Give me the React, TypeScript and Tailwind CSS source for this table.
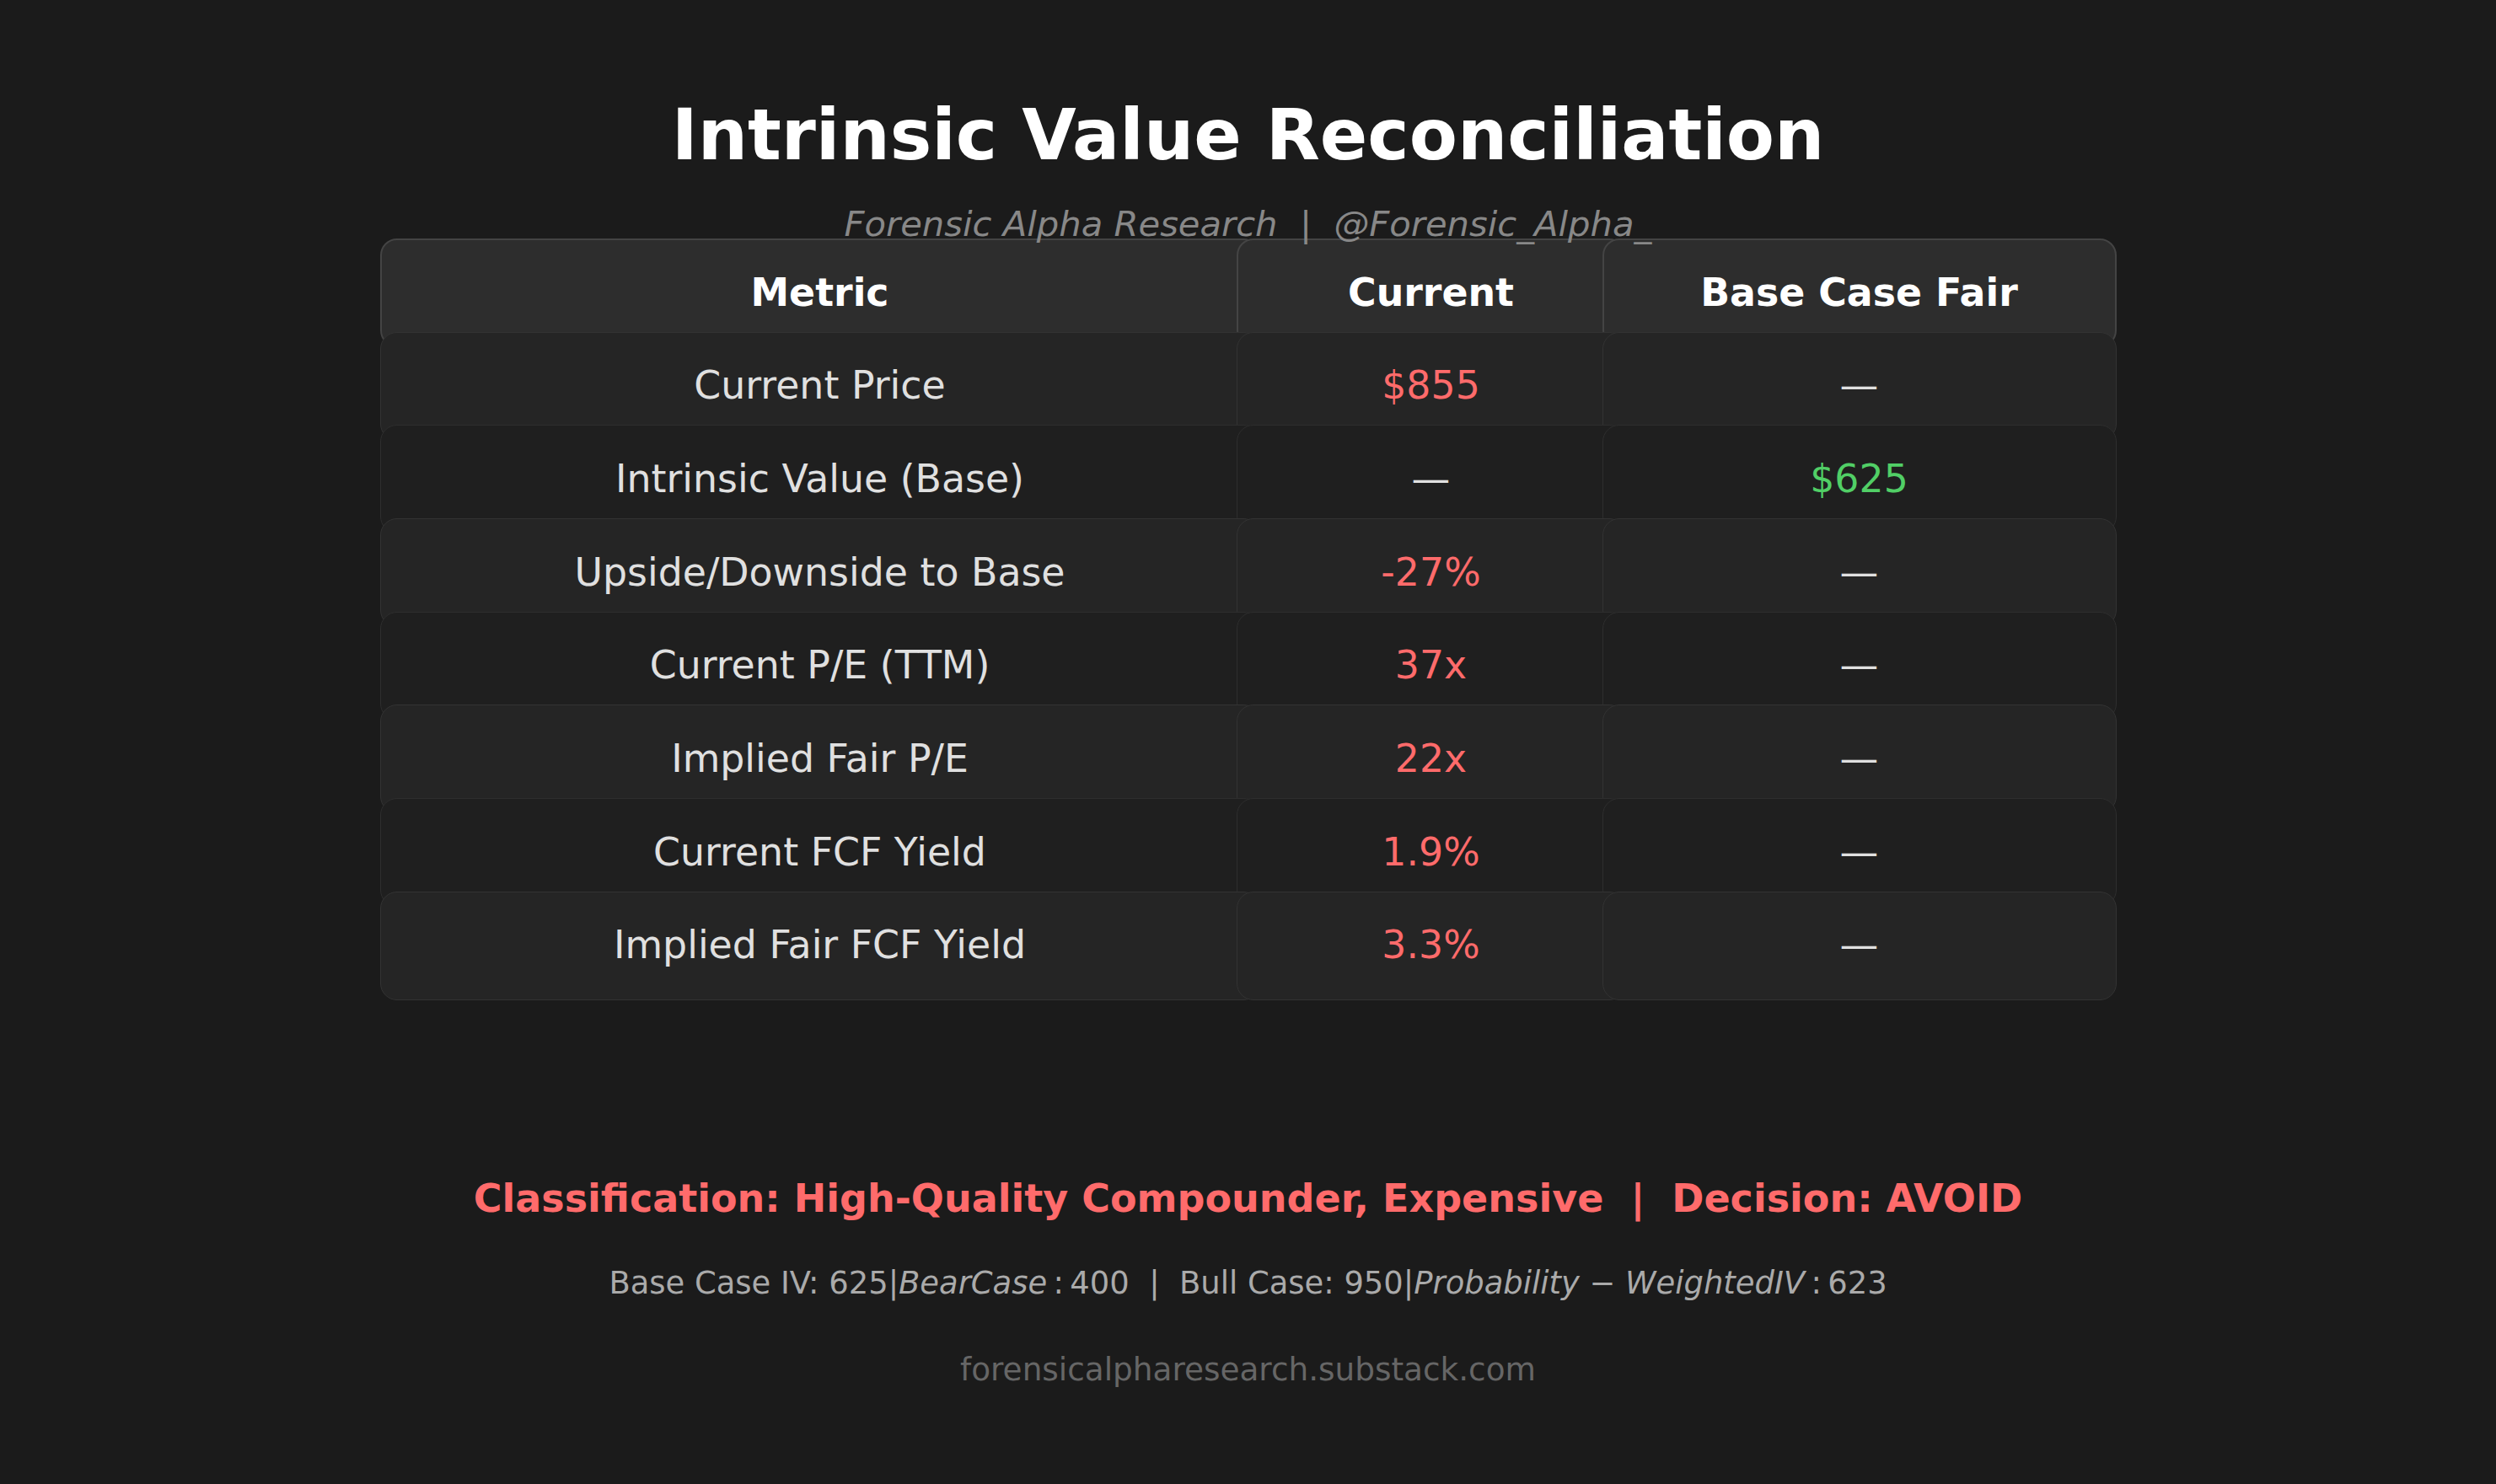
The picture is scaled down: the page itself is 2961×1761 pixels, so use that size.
import React from "react";

type Row = {
  metric: string;
  current: string;
  currentTone: "red" | "plain";
  fair: string;
  fairTone: "green" | "plain";
};

const rows: Row[] = [
  { metric: "Current Price", current: "$855", currentTone: "red", fair: "—", fairTone: "plain" },
  { metric: "Intrinsic Value (Base)", current: "—", currentTone: "plain", fair: "$625", fairTone: "green" },
  { metric: "Upside/Downside to Base", current: "-27%", currentTone: "red", fair: "—", fairTone: "plain" },
  { metric: "Current P/E (TTM)", current: "37x", currentTone: "red", fair: "—", fairTone: "plain" },
  { metric: "Implied Fair P/E", current: "22x", currentTone: "red", fair: "—", fairTone: "plain" },
  { metric: "Current FCF Yield", current: "1.9%", currentTone: "red", fair: "—", fairTone: "plain" },
  { metric: "Implied Fair FCF Yield", current: "3.3%", currentTone: "red", fair: "—", fairTone: "plain" },
];

const headCell =
  "h-[129px] shrink-0 flex items-center justify-center rounded-[20px] border-2 border-[#444444] bg-[#2d2d2d] text-white font-bold";

export default function App() {
  return (
    <div className="min-h-[1761px] w-full bg-[#1b1b1b] font-['DejaVu_Sans',sans-serif] text-[45.8px] leading-none">
      <div className="flex flex-col items-center pt-[119px]">
        {/* Title */}
        <h1 className="h-[84px] text-[83.3px] leading-none font-bold text-white">
          Intrinsic Value Reconciliation
        </h1>
        <p className="relative z-10 mt-[41.5px] h-[38.5px] whitespace-pre text-[41.7px] leading-none italic text-[#888888]">
          Forensic Alpha Research  |  @Forensic_Alpha_
        </p>

        {/* Table */}
        <div className="flex flex-col">
          <div className="flex h-[110.7px] items-start">
            <div className={`${headCell} w-[1044px]`}>Metric</div>
            <div className={`${headCell} -ml-[28px] w-[462px]`}>Current</div>
            <div className={`${headCell} -ml-[28px] w-[610px]`}>Base Case Fair</div>
          </div>

          {rows.map((row, index) => {
            const cell =
              index % 2 === 0
                ? "h-[129px] shrink-0 flex items-center justify-center rounded-[20px] border-[1.5px] border-[#333333] bg-[#252525]"
                : "h-[129px] shrink-0 flex items-center justify-center rounded-[20px] border-[1.5px] border-[#2e2e2e] bg-[#1f1f1f]";
            return (
              <div key={index} className="flex h-[110.7px] items-start">
                <div className={`${cell} w-[1044px] text-[#e0e0e0]`}>{row.metric}</div>
                <div
                  className={`${cell} -ml-[28px] w-[462px] ${
                    row.currentTone === "red" ? "text-[#ff6b6b]" : "text-[#e0e0e0]"
                  }`}
                >
                  {row.current}
                </div>
                <div
                  className={`${cell} -ml-[28px] w-[610px] ${
                    row.fairTone === "green" ? "text-[#51cf66]" : "text-[#e0e0e0]"
                  }`}
                >
                  {row.fair}
                </div>
              </div>
            );
          })}
        </div>

        {/* Summary */}
        <p className="mt-[230px] h-[46px] whitespace-pre text-[46px] leading-none font-bold text-[#ff6b6b]">
          Classification: High-Quality Compounder, Expensive  |  Decision: AVOID
        </p>
        <p className="mt-[60px] h-[36.9px] whitespace-pre text-[36.9px] leading-none text-[#aaaaaa]">
          Base Case IV: 625|<i>BearCase</i>{"\u2009:\u2009"}400  |  Bull Case: 950|<i>Probability</i> − <i>WeightedIV</i>{"\u2009:\u2009"}623
        </p>
        <p className="mt-[66px] text-[37.4px] leading-none text-[#666666]">
          forensicalpharesearch.substack.com
        </p>
      </div>
    </div>
  );
}
